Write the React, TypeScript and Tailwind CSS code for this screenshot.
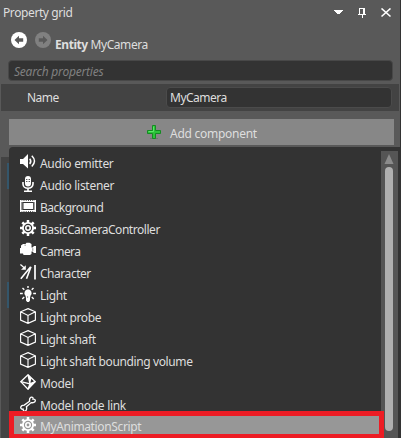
import type { ReactNode } from "react";

const Svg = ({ children, className = "" }: { children: ReactNode; className?: string }) => (
  <svg width="16" height="16" viewBox="0 0 16 16" fill="none" stroke="#fff" className={"shrink-0 " + className}>
    {children}
  </svg>
);

const Speaker = () => (
  <Svg>
    <path d="M0 5h3l5-5v14.5L3 10H0z" fill="#fff" stroke="none" />
    <path d="M9.7 4.7q2.2 2.6 0 5.2M11.8 1.7q5.4 5.3 0 10.8" strokeWidth="1.5" />
  </Svg>
);

const Mic = () => (
  <Svg>
    <rect x="5" y="0" width="6" height="10.5" rx="3" fill="#fff" stroke="none" />
    <path d="M6 3.5h1.4M8.6 3.5H10M6 5.5h1.4M8.6 5.5H10" stroke="#333" strokeWidth=".8" />
    <path d="M3 6v2a5 4.3 0 0 0 10 0V6M8 12.5V15M4 15.2h8" strokeWidth="1.6" />
  </Svg>
);

const Film = () => (
  <Svg>
    <path d="M.75 2v12M15.25 2v12" strokeWidth="1.5" />
    <path d="M0 3.5h16M0 12.5h16" strokeWidth="1" />
    <path d="M0 2.5h16M0 13.5h16" strokeWidth="1" strokeDasharray="1.4 .8" />
    <rect x="3.5" y="5" width="9.5" height="6" fill="#fff" stroke="none" />
    <path d="M2.5 4v8M13.8 4v8" strokeWidth=".7" opacity=".35" />
  </Svg>
);

const Gear = ({ hole = "#333" }: { hole?: string }) => (
  <Svg>
    <path
      d="M8 0v3M8 13v3M0 8h3M13 8h3M2.3 2.3l2.2 2.2M11.5 11.5l2.2 2.2M13.7 2.3l-2.2 2.2M4.5 11.5l-2.2 2.2"
      strokeWidth="2.5"
    />
    <circle cx="8" cy="8" r="5.1" fill={hole} strokeWidth="1.9" />
    <circle cx="8" cy="8" r="2.2" strokeWidth="1.6" />
  </Svg>
);

const CameraIcon = () => (
  <Svg>
    <path d="M1 6V3.5L3 2h2.5l1-1.3h3L11.5 2v3.5h1L14 4h2v7h-2l-1.5-1.5h-1V12L10 13H3.5L3 11.5H0V6z" fill="#fff" stroke="none" />
    <path d="M4.5 3.2h1.3M12.8 6.2v2.6" stroke="#333" strokeWidth=".6" />
  </Svg>
);

const Character = () => (
  <Svg>
    <path d="M.4.6 4.5 4" strokeWidth="1.3" />
    <path d="M5.8 1.2v4.6H1z" fill="#fff" stroke="none" />
    <path d="M.8 14.8 10.7 2.8M6.5 14.8l4.5-12" strokeWidth="1.6" />
    <path d="M15 1V15.5" strokeWidth="1.7" />
  </Svg>
);

const Bulb = () => (
  <Svg>
    <path d="M8 3.2a3.8 3.8 0 0 1 2.5 6.5L10 12v2.5L8.9 16H7.2L6 14.5V12l-.5-2.3A3.8 3.8 0 0 1 8 3.2z" fill="#fff" stroke="none" />
    <path d="M8 0v2M2.5 2l1.8 1.8M13.5 2l-1.8 1.8M0 7.5h2.8M13.2 7.5H16M2.3 13l1.9-1.9M13.7 13l-1.9-1.9" strokeWidth="1.4" />
    <path d="M7.6 10v2" stroke="#555" strokeWidth=".6" />
  </Svg>
);

const Cube = () => (
  <Svg>
    <path d="M8 .6 15.4 3.8v8.3L8 15.4.6 12.1V3.8zM.6 3.8 8 7.4l7.4-3.6M8 7.4v8" strokeWidth="1.15" />
  </Svg>
);

const ModelIcon = () => (
  <Svg>
    <path d="M8 .8 15.2 7.7 8 15.2.8 7.7z" strokeWidth="1.3" />
    <path d="M8 .8 10 9.8.8 7.7M8 15.2l2-5.4 5.2-2.1" strokeWidth="1.3" />
    <path d="M10 9.8 15.2 7.7 8 15.2zM8 1l2 8.8 1.5-5.5z" fill="#fff" stroke="none" />
    <path d="M11.6 5.2 13.3 7l-2.3.8z" fill="#333" stroke="none" />
  </Svg>
);

const Bone = () => (
  <Svg>
    <path d="M4.2 9.1 9.6 5.2C9.1 2.8 10.5.8 12 1.1c1 .2 1.2 1.1 1 2 1.4-.2 2.5.6 2.3 1.8-.2 1.5-2.2 2.1-4.1 1.7L6.4 10.8c.7 2-.1 4.2-1.6 4.3-1.2.1-1.7-.8-1.6-1.9-1.4.2-2.6-.5-2.5-1.8.1-1.4 1.9-2.2 3.5-2.3z" strokeWidth="1.3" />
  </Svg>
);

const items = [
  { name: "Audio emitter", icon: <Speaker />, track: "tracking-[-0.3px]" },
  { name: "Audio listener", icon: <Mic />, track: "tracking-[-0.28px]" },
  { name: "Background", icon: <Film />, track: "tracking-[-0.5px]" },
  { name: "BasicCameraController", icon: <Gear />, track: "tracking-[-0.45px]" },
  { name: "Camera", icon: <CameraIcon />, track: "tracking-[-0.55px]" },
  { name: "Character", icon: <Character />, track: "tracking-[-0.46px]" },
  { name: "Light", icon: <Bulb />, track: "tracking-[-0.35px]" },
  { name: "Light probe", icon: <Cube />, track: "tracking-[-0.36px]" },
  { name: "Light shaft", icon: <Cube />, track: "tracking-[-0.4px]" },
  { name: "Light shaft bounding volume", icon: <Cube />, track: "tracking-[-0.38px]" },
  { name: "Model", icon: <ModelIcon />, track: "tracking-[-0.3px]" },
  { name: "Model node link", icon: <Bone />, track: "tracking-[-0.3px]" },
];

const NavArrow = ({ color, flip = false }: { color: string; flip?: boolean }) => (
  <svg width="16" height="16" viewBox="0 0 16 16" className={flip ? "-scale-x-100" : ""}>
    <circle cx="8" cy="8" r="8" fill={color} />
    <path d="M3.5 8 8 3.8v2.5h4.2v3.4H8v2.5z" fill="#595959" />
  </svg>
);

export default function App() {
  return (
    <div className="flex h-[438px] w-[401px] flex-col overflow-hidden border-r border-[#333] bg-[#595959] font-['Noto_Sans','Open_Sans',sans-serif] text-[12px] leading-4 text-[#dedede]">
      <header className="flex h-6 shrink-0 items-center pl-[3px] pr-2">
        <span className="flex-1 pt-[2px] tracking-[-0.4px]">Property grid</span>
        <svg width="58" height="10" viewBox="0 0 58 10" shapeRendering="crispEdges" className="mt-px">
          <path d="M0 2h9v1H8v1H7v1H6v1H3V5H2V4H1V3H0z" fill="#fff" />
          <path d="M25.5 0v6M25 .5h6M29.5 0v6M30.5 0v6M24 6.5h8M28 7v3" stroke="#fff" fill="none" />
          <path d="m47.5.5 9 8M47.5 8.5l9-8" stroke="#fff" strokeWidth="1.6" shapeRendering="auto" />
        </svg>
      </header>

      <div className="flex h-9 shrink-0 items-center pl-[11px] pb-1">
        <NavArrow color="#fff" />
        <span className="w-2" />
        <NavArrow color="#808080" flip />
        <span className="pl-1 pt-[10px] tracking-[-0.43px]">
          <b>Entity</b> MyCamera
        </span>
      </div>

      <div className="ml-2 flex h-[21px] w-[385px] shrink-0 items-center rounded-[4px] border border-[#484848] bg-[#333] pl-[5px] italic text-[#808080]">
        <span className="pt-[3px] tracking-[-0.22px]">Search properties</span>
      </div>

      <div className="ml-px mt-[3px] flex h-[27px] w-[398px] shrink-0 items-center bg-[#434343] pl-[26px]">
        <span className="w-[139px] pt-px tracking-[-0.5px]">Name</span>
        <div className="flex h-[21px] w-[226px] items-center rounded-[4px] border border-[#4b4b4b] bg-[#333] pl-[3px]">
          <span className="pt-px tracking-[-0.5px]">MyCamera</span>
        </div>
      </div>

      <button className="ml-[9px] mt-2 flex h-[26px] w-[385px] shrink-0 items-center bg-[#878787] pl-[138px]">
        <svg width="14" height="14" viewBox="0 0 14 14">
          <path d="M3 13.5h8" stroke="#666" opacity=".6" />
          <path d="M5.5.5h3v5h5v3h-5v5h-3v-5h-5v-3h5z" fill="#2cc43b" stroke="#148b22" />
          <path d="M6.5 1.5v5H1.5" stroke="#5be867" fill="none" />
        </svg>
        <span className="pl-[9px] pt-[3px] tracking-[-0.27px]">Add component</span>
      </button>

      <div className="mt-[2px] flex min-h-0 flex-1">
        <aside className="flex w-[9px] shrink-0 flex-col items-end pl-px pt-[10px]">
          <div className="flex w-2 flex-1 flex-col items-end bg-[#434343] pt-[6px]">
            <span className="h-[26px] w-[2px] bg-[#34566b]" />
            <span className="mt-[93px] h-[26px] w-[2px] bg-[#34566b]" />
          </div>
        </aside>
        <div className="flex min-w-0 flex-1 rounded-tl-[4px] bg-[#333]">
          <div className="flex w-[372px] shrink-0 flex-col pt-1">
            {items.map((item) => (
              <div key={item.name} className="flex h-[22px] shrink-0 items-center gap-1 pl-[11px]">
                {item.icon}
                <span className={"whitespace-nowrap pt-[3px] " + item.track}>{item.name}</span>
              </div>
            ))}
            <div className="relative z-10 -mt-1 flex h-[27px] w-[375px] shrink-0 items-center gap-1 border-[5px] border-b-4 border-[#ed1c24] bg-[#979797] pl-[6px]">
              <Gear hole="#979797" />
              <span className="pt-[3px] tracking-[-0.36px]">MyAnimationScript</span>
            </div>
          </div>
          <div className="mt-1 flex w-[17px] flex-col items-center bg-[#555]">
            <svg width="10" height="10" viewBox="0 0 10 10" className="mr-px mt-[3px] shrink-0">
              <path d="M5 0 9.5 10h-9z" fill="#8b8b8b" />
            </svg>
            <div className="mr-px mt-[3px] h-[264px] w-2 shrink-0 rounded-full bg-[#b0b0b0]" />
          </div>
        </div>
      </div>
    </div>
  );
}
